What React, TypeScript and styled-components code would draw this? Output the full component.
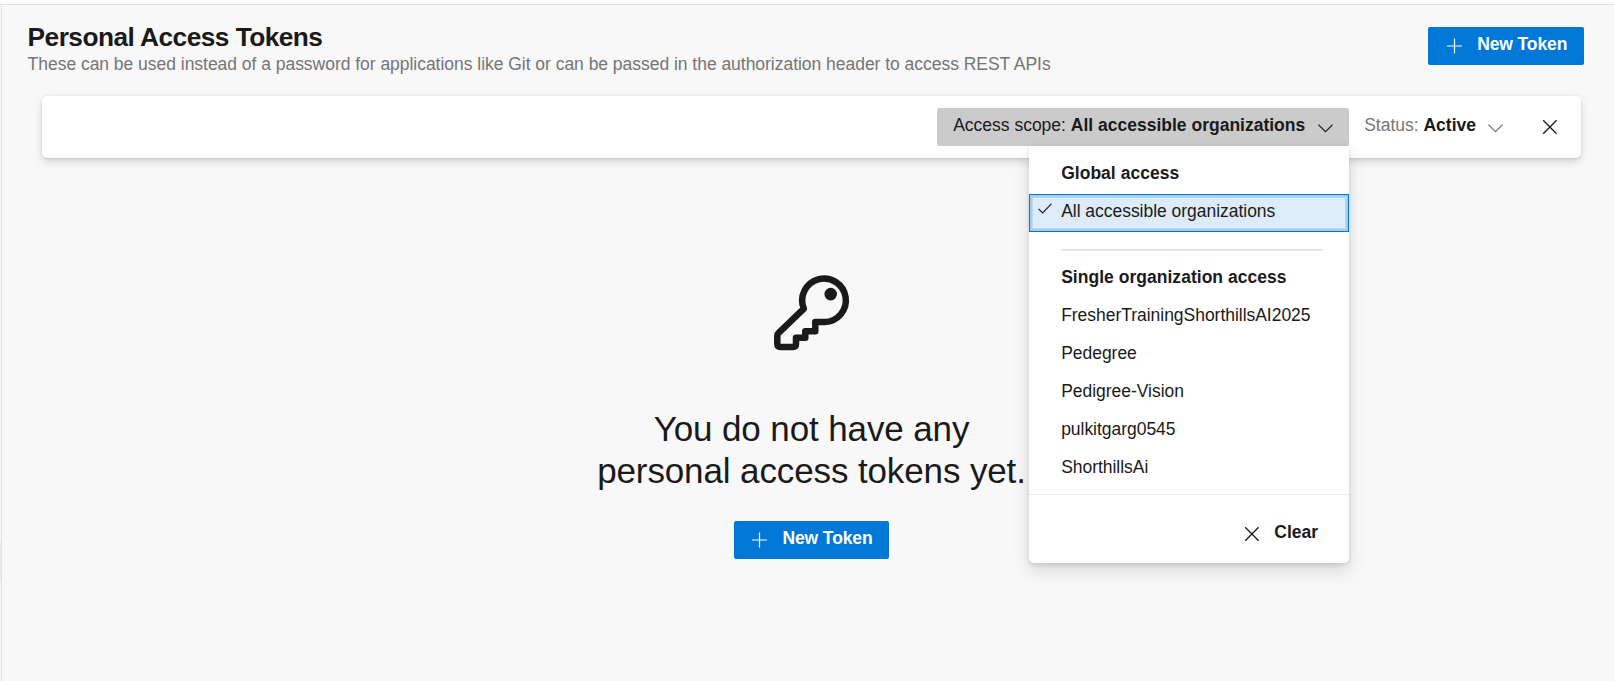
import React from "react";
import styled, { createGlobalStyle } from "styled-components";

const GlobalStyle = createGlobalStyle`
  * { box-sizing: border-box; }
  body {
    margin: 0;
    background: #fff;
    color: #1a1a1a;
    font-family: "Liberation Sans", Arial, sans-serif;
    font-size: 17.5px;
  }
  button { font: inherit; color: inherit; border: 0; margin: 0; background: none; }
`;

const Page = styled.div`
  display: flex;
  height: 681px;
  padding-top: 4px;
  overflow: hidden;
`;

const Gutter = styled.div`
  flex: none;
  width: 2px;
  padding-top: 537px;
  background: #f8f8f8;
  border-top: 1px solid #e3e3e3;
  border-right: 1px solid #e3e3e3;
`;

const GutterThumb = styled.div`
  height: 40px;
  background: #eaeaea;
`;

const Content = styled.main`
  flex: 1;
  min-width: 0;
  background: #f8f8f8;
  border-top: 1px solid #e3e3e3;
`;

const Header = styled.header`
  display: flex;
  justify-content: space-between;
  align-items: flex-start;
  height: 91px;
  padding: 22px 30px 0 25.6px;
`;

const Title = styled.h1`
  margin: -5px 0 0;
  font-size: 26.25px;
  line-height: 30px;
  letter-spacing: -0.02em;
  font-weight: 700;
`;

const Subtitle = styled.p`
  margin: 0;
  line-height: 24px;
  letter-spacing: -0.03px;
  color: #757575;
`;

const PrimaryButton = styled.button`
  display: flex;
  align-items: center;
  height: 38px;
  padding: 0 16.7px 0 17.7px;
  border-radius: 2px;
  background: #0078d7;
  color: #fff;
  font-weight: 700;
  letter-spacing: -0.1px;
`;

const ButtonText = styled.span<{ $gap?: number }>`
  margin-left: ${(p) => p.$gap ?? 15}px;
  padding-bottom: 4px;
  line-height: 34px;
  white-space: nowrap;
`;

const Body = styled.section`
  padding: 0 33px 0 40px;
`;

const FilterBar = styled.div`
  display: flex;
  justify-content: flex-end;
  height: 62px;
  padding: 12px 12px 12px 0;
  border-radius: 5px;
  background: #fff;
  box-shadow: 0 4px 9px rgba(0, 0, 0, 0.132), 0 0.75px 2.25px rgba(0, 0, 0, 0.108);
`;

const FilterSlot = styled.div`
  position: relative;
`;

const FilterButton = styled.button<{ $open?: boolean }>`
  display: flex;
  align-items: center;
  width: ${(p) => (p.$open ? "412px" : "auto")};
  height: 38px;
  padding: 0 16px 0 ${(p) => (p.$open ? 16 : 15)}px;
  border-radius: 2px;
  background: ${(p) => (p.$open ? "#cbcbcb" : "transparent")};
  color: ${(p) => (p.$open ? "#1a1a1a" : "#757575")};
`;

const FilterValue = styled.strong`
  color: #1a1a1a;
`;

const CloseButton = styled.button`
  display: flex;
  align-items: center;
  justify-content: center;
  width: 38px;
  height: 38px;
  margin-left: 12px;
  padding: 0;
`;

const Menu = styled.div`
  position: absolute;
  top: 38px;
  right: 0;
  z-index: 2;
  width: 320px;
  height: 417px;
  padding-top: 10px;
  border-radius: 0 0 5px 5px;
  background: #fff;
  box-shadow: 0 8px 18px rgba(0, 0, 0, 0.132), 0 1.5px 4.5px rgba(0, 0, 0, 0.108);
`;

const MenuRow = styled.div<{ $header?: boolean; $selected?: boolean }>`
  display: flex;
  height: 38px;
  line-height: 34px;
  font-weight: ${(p) => (p.$header ? 700 : 400)};
  letter-spacing: ${(p) => (p.$header ? "0.03px" : "-0.03px")};
  background: ${(p) => (p.$selected ? "#deecf9" : "transparent")};
  box-shadow: ${(p) =>
    p.$selected ? "inset 0 0 0 1px #0078d7, inset 0 0 0 3px #a3cdf2, inset 0 0 0 4px #b9d9f5" : "none"};
`;

const CheckCell = styled.span`
  flex: none;
  width: 32px;
  padding: 9px 0 0 9px;
  line-height: 0;
`;

const Separator = styled.div`
  height: 2px;
  margin: 17px 26px 9px 32px;
  background: #e4e4e4;
`;

const MenuFooter = styled.div`
  display: flex;
  justify-content: flex-end;
  height: 69px;
  margin-top: 6px;
  padding: 20px 15px 0 0;
  border-top: 1px solid #eaeaea;
`;

const ClearButton = styled.button`
  display: flex;
  align-items: center;
  height: 38px;
  padding: 0 16px;
  font-weight: 700;
`;

const EmptyState = styled.div`
  display: flex;
  flex-direction: column;
  align-items: center;
  padding-top: 117px;
`;

const EmptyMessage = styled.p`
  width: 445px;
  margin: 57px 0 29px;
  font-size: 35px;
  line-height: 42px;
  letter-spacing: -0.12px;
  text-align: center;
`;

const Icon = styled.svg<{ $dx?: number; $dy?: number }>`
  display: block;
  flex: none;
  overflow: visible;
  fill: none;
  stroke: currentColor;
  margin-left: ${(p) => p.$dx ?? 0}px;
  margin-top: ${(p) => p.$dy ?? 0}px;
`;

const PlusIcon = () => (
  <Icon width="16" height="16" $dy={-1}>
    <path d="M8.5 0.5v15M1 8h15" strokeWidth="1.2" />
  </Icon>
);

const CrossIcon = () => (
  <Icon width="14" height="14">
    <path d="M0.2 0.3l13.4 13.4M13.6 0.3L0.2 13.7" strokeWidth="1.3" />
  </Icon>
);

const ChevronIcon = ({ dx }: { dx: number }) => (
  <Icon width="15" height="9" $dx={dx} $dy={2}>
    <path d="M0.4 0.6l7.1 7.1 7.1-7.1" strokeWidth="1.25" />
  </Icon>
);

const CheckIcon = () => (
  <Icon width="14" height="11">
    <path d="M0.6 5.8l4 4L13.4 0.9" strokeWidth="1.2" />
  </Icon>
);

const KeyIcon = () => (
  <Icon width="76" height="76" viewBox="0 0 76 76">
    <path
      d="M42 47.1H50.7A21.8 21.8 0 1 0 29.9 33.7L4.4 58.2Q3.3 59.2 3.3 60.7V68.8Q3.3 71.9 6.5 71.9H19Q22 71.9 22 68.8V62.7H31.3V56.3H41.3V47.1H50.7"
      strokeWidth="6.5"
      strokeLinejoin="round"
    />
    <circle cx="56.7" cy="19.1" r="6.3" fill="currentColor" stroke="none" />
  </Icon>
);

const NewTokenButton = () => (
  <PrimaryButton>
    <PlusIcon />
    <ButtonText>New Token</ButtonText>
  </PrimaryButton>
);

const organizations = [
  "FresherTrainingShorthillsAI2025",
  "Pedegree",
  "Pedigree-Vision",
  "pulkitgarg0545",
  "ShorthillsAi",
];

const ScopeMenu = () => (
  <Menu>
    <MenuRow $header>
      <CheckCell />
      Global access
    </MenuRow>
    <MenuRow $selected>
      <CheckCell>
        <CheckIcon />
      </CheckCell>
      All accessible organizations
    </MenuRow>
    <Separator />
    <MenuRow $header>
      <CheckCell />
      Single organization access
    </MenuRow>
    {organizations.map((name) => (
      <MenuRow key={name}>
        <CheckCell />
        {name}
      </MenuRow>
    ))}
    <MenuFooter>
      <ClearButton>
        <CrossIcon />
        <ButtonText $gap={15}>Clear</ButtonText>
      </ClearButton>
    </MenuFooter>
  </Menu>
);

export default function App() {
  return (
    <>
      <GlobalStyle />
      <Page>
        <Gutter>
          <GutterThumb />
        </Gutter>
        <Content>
          <Header>
            <div>
              <Title>Personal Access Tokens</Title>
              <Subtitle>
                These can be used instead of a password for applications like Git or can be passed in
                the authorization header to access REST APIs
              </Subtitle>
            </div>
            <NewTokenButton />
          </Header>
          <Body>
            <FilterBar>
              <FilterSlot>
                <FilterButton $open>
                  <ButtonText $gap={0}>
                    Access scope: <FilterValue>All accessible organizations</FilterValue>
                  </ButtonText>
                  <ChevronIcon dx={13} />
                </FilterButton>
                <ScopeMenu />
              </FilterSlot>
              <FilterButton>
                <ButtonText $gap={0}>
                  Status: <FilterValue>Active</FilterValue>
                </ButtonText>
                <ChevronIcon dx={12} />
              </FilterButton>
              <CloseButton>
                <CrossIcon />
              </CloseButton>
            </FilterBar>
            <EmptyState>
              <KeyIcon />
              <EmptyMessage>You do not have any personal access tokens yet.</EmptyMessage>
              <NewTokenButton />
            </EmptyState>
          </Body>
        </Content>
      </Page>
    </>
  );
}
